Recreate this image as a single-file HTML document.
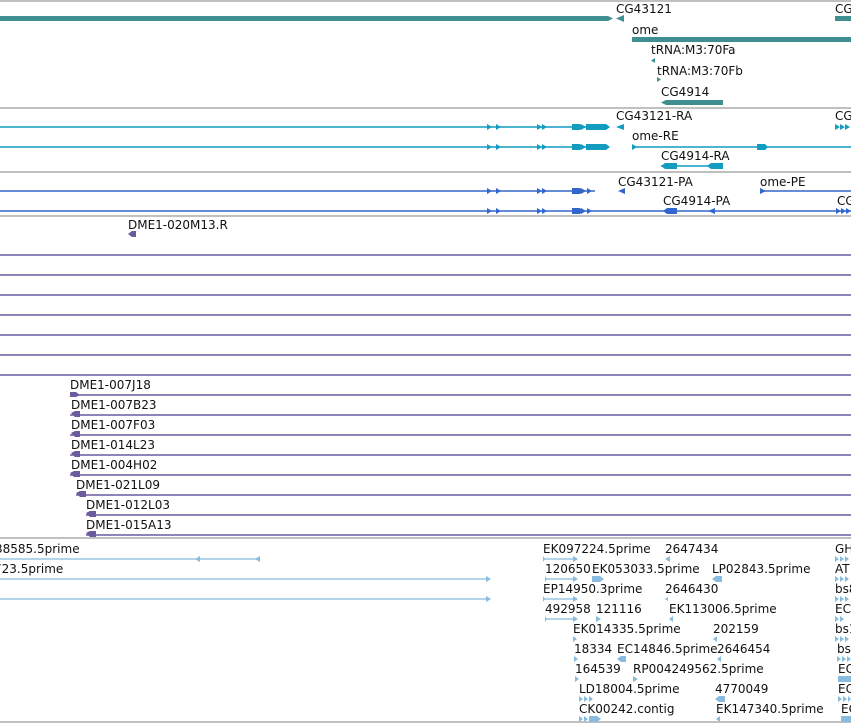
<!DOCTYPE html>
<html><head><meta charset="utf-8"><style>
html,body{margin:0;padding:0;background:#fff;width:851px;height:724px;overflow:hidden}
svg{display:block}
text{font-family:"DejaVu Sans","Liberation Sans",sans-serif;font-size:12px;fill:#111}
</style></head><body>
<svg width="851" height="724" viewBox="0 0 851 724" xmlns="http://www.w3.org/2000/svg">
<!-- grey separators -->
<g stroke="#c0c0c0" stroke-width="2">
<line x1="0" y1="1" x2="851" y2="1"/><line x1="0" y1="108" x2="851" y2="108"/>
<line x1="0" y1="172" x2="851" y2="172"/><line x1="0" y1="216" x2="851" y2="216"/>
<line x1="0" y1="538" x2="851" y2="538"/><line x1="0" y1="722" x2="851" y2="722"/>
</g>
<!-- genes -->
<g fill="#3f8f91">
<polygon points="0,16 608,16 613,18.5 608,21 0,21"/>
<polygon points="616,18.5 624,15 624,22"/>
<rect x="835" y="16" width="16" height="5"/>
<rect x="632" y="37" width="219" height="5"/>
<polygon points="651,60.5 655,58 655,63"/>
<polygon points="657,82 661,79.5 657,77"/>
<polygon points="661,102.5 666,100 723,100 723,105 666,105"/>
</g>
<text x="616" y="13">CG43121</text><text x="835" y="13">CG</text>
<text x="632" y="34">ome</text>
<text x="651" y="54">tRNA:M3:70Fa</text>
<text x="657" y="75">tRNA:M3:70Fb</text>
<text x="661" y="96">CG4914</text>
<!-- RA transcripts -->
<g fill="#119cc0" stroke="#119cc0">
<line x1="0" y1="127" x2="600" y2="127" stroke-width="1.5"/>
<line x1="0" y1="147" x2="600" y2="147" stroke-width="1.5"/>
<line x1="632" y1="147" x2="851" y2="147" stroke-width="1.5"/>
<line x1="661" y1="166" x2="723" y2="166" stroke-width="1.5"/>
<g stroke="none">
<path d="M487,124 l5,3 l-5,3z M496,124 l5,3 l-5,3z M537,124 l5,3 l-5,3z M542,124 l5,3 l-5,3z M572,124 l8,0 l3,3 l-3,3 l-8,0z M581,124 l5,3 l-5,3z M586,124 l20,0 l4,3 l-4,3 l-20,0z"/>
<path d="M487,144 l5,3 l-5,3z M496,144 l5,3 l-5,3z M537,144 l5,3 l-5,3z M542,144 l5,3 l-5,3z M572,144 l8,0 l3,3 l-3,3 l-8,0z M581,144 l5,3 l-5,3z M586,144 l20,0 l4,3 l-4,3 l-20,0z"/>
<polygon points="616,127 624,124 624,130"/>
<path d="M835,124 l5,3 l-5,3z M840,124 l5,3 l-5,3z M845,124 l5,3 l-5,3z"/>
<polygon points="632,144 637,147 632,150"/>
<polygon points="757,144 765,144 768,147 765,150 757,150"/>
<polygon points="661,166 665,163 677,163 677,169 665,169"/>
<polygon points="707,166 711,163 723,163 723,169 711,169"/>
</g></g>
<text x="616" y="120">CG43121-RA</text><text x="835" y="120">CG</text>
<text x="632" y="140">ome-RE</text>
<text x="661" y="160">CG4914-RA</text>
<!-- PA -->
<g fill="#3366cc" stroke="#3366cc">
<line x1="0" y1="191" x2="595" y2="191" stroke-width="1.5"/>
<line x1="0" y1="211" x2="851" y2="211" stroke-width="1.5"/>
<line x1="760" y1="191" x2="851" y2="191" stroke-width="1.5"/>
<g stroke="none">
<path d="M487,188 l5,3 l-5,3z M496,188 l5,3 l-5,3z M537,188 l5,3 l-5,3z M542,188 l5,3 l-5,3z M572,188 l8,0 l3,3 l-3,3 l-8,0z M581,188 l5,3 l-5,3z M587,188 l5,3 l-5,3z"/>
<path d="M487,208 l5,3 l-5,3z M496,208 l5,3 l-5,3z M537,208 l5,3 l-5,3z M542,208 l5,3 l-5,3z M572,208 l8,0 l3,3 l-3,3 l-8,0z M581,208 l5,3 l-5,3z M587,208 l5,3 l-5,3z"/>
<polygon points="618,191 625,188 625,194"/>
<polygon points="760,188 766,191 760,194"/>
<polygon points="663,211 667,208 677,208 677,214 667,214"/>
<polygon points="708,211 715,208 715,214"/>
<path d="M836,208 l5,3 l-5,3z M841,208 l5,3 l-5,3z M846,208 l5,3 l-5,3z"/>
</g></g>
<text x="618" y="186">CG43121-PA</text><text x="760" y="186">ome-PE</text>
<text x="663" y="205">CG4914-PA</text><text x="837" y="205">CG</text>
<!-- purple -->
<g stroke="#6b5b9e" stroke-width="1.5">
<line x1="0" y1="255" x2="851" y2="255"/><line x1="0" y1="275" x2="851" y2="275"/>
<line x1="0" y1="295" x2="851" y2="295"/><line x1="0" y1="315" x2="851" y2="315"/>
<line x1="0" y1="335" x2="851" y2="335"/><line x1="0" y1="355" x2="851" y2="355"/>
<line x1="0" y1="375" x2="851" y2="375"/>
<line x1="70" y1="395" x2="851" y2="395"/><line x1="70" y1="415" x2="851" y2="415"/>
<line x1="70" y1="435" x2="851" y2="435"/><line x1="70" y1="455" x2="851" y2="455"/>
<line x1="70" y1="475" x2="851" y2="475"/><line x1="76" y1="495" x2="851" y2="495"/>
<line x1="86" y1="515" x2="851" y2="515"/><line x1="86" y1="535" x2="851" y2="535"/>
</g>
<g fill="#6b5b9e">
<polygon points="128,234 132,231 136,231 136,237 132,237"/>
<polygon points="70,392 76,392 80,395 76,397 70,397"/>
<polygon points="71,413 75,411 80,411 80,417 75,417"/>
<polygon points="71,433 75,431 80,431 80,437 75,437"/>
<polygon points="71,453 75,451 80,451 80,457 75,457"/>
<polygon points="70,473 74,471 80,471 80,477 74,477"/>
<polygon points="76,493 80,491 86,491 86,497 80,497"/>
<polygon points="86,513 90,511 96,511 96,517 90,517"/>
<polygon points="86,533 90,531 96,531 96,537 90,537"/>
</g>
<text x="128" y="229">DME1-020M13.R</text>
<text x="70" y="389">DME1-007J18</text><text x="71" y="409">DME1-007B23</text>
<text x="71" y="429">DME1-007F03</text><text x="71" y="449">DME1-014L23</text>
<text x="71" y="469">DME1-004H02</text><text x="76" y="489">DME1-021L09</text>
<text x="86" y="509">DME1-012L03</text><text x="86" y="529">DME1-015A13</text>
<!-- light blue -->
<g stroke="#88bbdd" stroke-width="1.3">
<line x1="0" y1="559" x2="260" y2="559"/><line x1="0" y1="579" x2="490" y2="579"/>
<line x1="0" y1="599" x2="490" y2="599"/>
<line x1="543" y1="559" x2="577" y2="559"/><line x1="545" y1="579" x2="577" y2="579"/>
<line x1="543" y1="599" x2="577" y2="599"/><line x1="545" y1="619" x2="577" y2="619"/>
</g>
<g fill="#88bbdd">
<path d="M195,559 l5,-3 l0,6z M255,559 l5,-3 l0,6z M486,576 l5,3 l-5,3z M486,596 l5,3 l-5,3z"/>
<path d="M543,556 l2,3 l-2,3z M573,556 l5,3 l-5,3z M545,576 l2,3 l-2,3z M573,576 l5,3 l-5,3z M543,596 l2,3 l-2,3z M573,596 l5,3 l-5,3z M545,616 l2,3 l-2,3z M573,616 l5,3 l-5,3z"/>
<path d="M665,559 l5,-3 l0,6z M592,576 l8,0 l4,3 l-4,3 l-8,0z M712,579 l4,-3 l6,0 l0,6 l-6,0z M665,599 l3,-2 l0,4z"/>
<path d="M596,616 l5,3 l-5,3z M669,619 l4,-3 l0,6z M573,636 l4,3 l-4,3z M713,639 l4,-3 l0,6z"/>
<path d="M574,656 l4,3 l-4,3z M617,659 l4,-3 l5,0 l0,6 l-5,0z M717,659 l4,-3 l0,6z M575,676 l4,3 l-4,3z M633,676 l5,3 l-5,3z"/>
<path d="M579,696 l4,3 l-4,3z M584,696 l4,3 l-4,3z M589,696 l4,3 l-4,3z M715,699 l4,-3 l6,0 l0,6 l-6,0z"/>
<path d="M579,716 l4,3 l-4,3z M584,716 l4,3 l-4,3z M589,716 l8,0 l4,3 l-4,3 l-8,0z M716,719 l4,-3 l0,6z"/>
<path d="M835,556 l4,3 l-4,3z M840,556 l4,3 l-4,3z M845,556 l4,3 l-4,3z M835,576 l4,3 l-4,3z M840,576 l4,3 l-4,3z M845,576 l4,3 l-4,3z M835,596 l4,3 l-4,3z M840,596 l4,3 l-4,3z M845,596 l4,3 l-4,3z M835,616 l4,3 l-4,3z M840,616 l4,3 l-4,3z M835,636 l4,3 l-4,3z M840,636 l4,3 l-4,3z M845,636 l4,3 l-4,3z M837,656 l4,3 l-4,3z M842,656 l4,3 l-4,3z M847,656 l4,3 l-4,3z M838,676 l13,0 l0,6 l-13,0z M838,696 l4,3 l-4,3z M843,696 l4,3 l-4,3z M848,696 l3,3 l-3,3z M841,716 l10,0 l0,6 l-10,0z"/>
</g>
<text x="-5" y="553">38585.5prime</text><text x="-6" y="573">723.5prime</text>
<text x="543" y="553">EK097224.5prime</text><text x="665" y="553">2647434</text><text x="835" y="553">GH</text>
<text x="545" y="573">120650</text><text x="592" y="573">EK053033.5prime</text><text x="712" y="573">LP02843.5prime</text><text x="835" y="573">AT</text>
<text x="543" y="593">EP14950.3prime</text><text x="665" y="593">2646430</text><text x="835" y="593">bs8</text>
<text x="545" y="613">492958</text><text x="596" y="613">121116</text><text x="669" y="613">EK113006.5prime</text><text x="835" y="613">EC</text>
<text x="573" y="633">EK014335.5prime</text><text x="713" y="633">202159</text><text x="835" y="633">bs1</text>
<text x="574" y="653">18334</text><text x="617" y="653">EC14846.5prime</text><text x="717" y="653">2646454</text><text x="837" y="653">bs</text>
<text x="575" y="673">164539</text><text x="633" y="673">RP004249562.5prime</text><text x="838" y="673">EC</text>
<text x="579" y="693">LD18004.5prime</text><text x="715" y="693">4770049</text><text x="838" y="693">EC</text>
<text x="579" y="713">CK00242.contig</text><text x="716" y="713">EK147340.5prime</text><text x="841" y="713">EC</text>
</svg>
</body></html>
